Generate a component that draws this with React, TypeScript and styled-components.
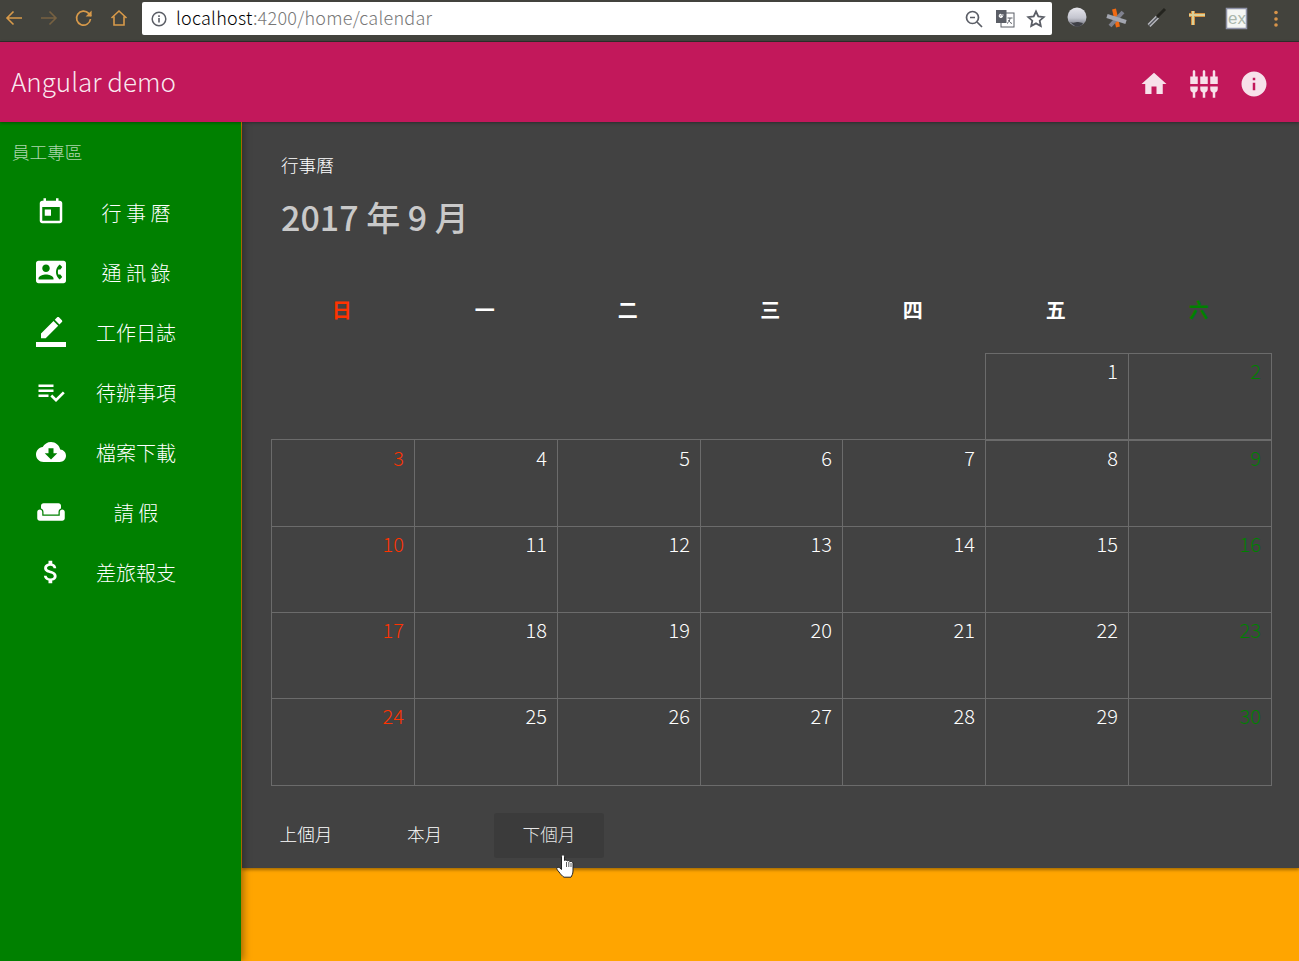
import * as React from 'react'
import styled, { createGlobalStyle } from 'styled-components'

const CJK = `'Noto Sans CJK TC', 'Noto Sans', sans-serif`

const Global = createGlobalStyle`
  html, body {
    margin: 0;
    padding: 0;
    height: 100%;
    background: #ffa500;
    font-family: ${CJK};
  }
  * { box-sizing: border-box; }
`

const Page = styled.div`
  position: relative;
  width: 1299px;
  height: 961px;
  overflow: hidden;
  display: flex;
  flex-direction: column;
  background: #ffa500;
`

const BrowserBar = styled.div`
  height: 42px;
  flex: none;
  background: #43433d;
  border-bottom: 1px solid #2f2f2b;
  display: flex;
  align-items: flex-start;
  padding: 2px 0 0 4px;
`

const NavButton = styled.div<{ $dim?: boolean }>`
  width: 20px;
  height: 20px;
  margin: 6px 15px 0 0;
  color: #d89a4a;
  opacity: ${p => (p.$dim ? 0.35 : 1)};
  svg { display: block; }
`

const AddressBar = styled.div`
  width: 910px;
  height: 33px;
  margin-left: -2px;
  background: #fff;
  border-radius: 2px;
  display: flex;
  align-items: center;
  padding: 0 6px 0 9px;
`

const Url = styled.div`
  flex: 1;
  margin: -2px 0 0 9px;
  font: 300 18px/33px ${CJK};
  letter-spacing: 0.25px;
  color: #000;
  white-space: nowrap;
  span { color: #777; }
`

const OmniIcon = styled.div`
  width: 20px;
  height: 20px;
  margin-left: 11px;
  color: #5b5e66;
  svg { display: block; }
`

const Extensions = styled.div`
  display: flex;
  align-items: center;
  height: 34px;
  margin-left: 14px;
  gap: 20px;
`

const Ext = styled.div`
  width: 20px;
  height: 20px;
  svg { display: block; overflow: visible; }
`

const AppBar = styled.div`
  position: relative;
  z-index: 3;
  height: 80px;
  flex: none;
  background: #c2185b;
  color: rgba(255, 255, 255, 0.87);
  display: flex;
  align-items: center;
  justify-content: space-between;
  padding: 0 30px 0 11px;
  box-shadow: 0 1px 3px rgba(0, 0, 0, 0.35);
`

const AppTitle = styled.div`
  margin-top: -2px;
  font: 300 26px/1 ${CJK};
  color: rgba(255, 255, 255, 0.92);
`

const AppIcons = styled.div`
  display: flex;
  gap: 20px;
  margin-top: 4px;
  svg { display: block; width: 30px; height: 30px; fill: rgba(255, 255, 255, 0.87); }
`

const Body = styled.div`
  flex: 1;
  display: flex;
  min-height: 0;
`

const SideNav = styled.nav`
  position: relative;
  z-index: 2;
  width: 241px;
  flex: none;
  background: #008000;
  box-shadow: 2px 0 8px rgba(0, 0, 0, 0.4);
  padding-top: 16px;
`

const SideTitle = styled.div`
  height: 45px;
  padding-left: 12px;
  font: 300 17.6px/28px ${CJK};
  color: rgba(255, 255, 255, 0.7);
`

const NavRow = styled.div`
  height: 60px;
  display: flex;
  align-items: center;
  padding-left: 36px;
  color: #fff;
  svg { display: block; width: 30px; height: 30px; margin-top: -2px; fill: #fff; flex: none; }
`

const NavLabel = styled.div`
  width: 140px;
  text-align: center;
  font: 300 20px/30px ${CJK};
`

const Content = styled.main`
  flex: 1;
  min-width: 0;
  margin-left: 1px;
`

const Card = styled.section`
  height: 746px;
  background: #424242;
  color: #fff;
  padding: 28px 27px 0 29px;
  box-shadow: 0 2px 3px rgba(0, 0, 0, 0.35);
`

const Eyebrow = styled.div`
  margin-left: 10px;
  font: 300 17.6px/30px ${CJK};
`

const Heading = styled.h1`
  margin: 13px 0 0 10px;
  font: 500 34px/48px ${CJK};
  color: rgba(255, 255, 255, 0.72);
`

const WeekRow = styled.div`
  display: grid;
  grid-template-columns: 143px 143px 143px 142px 143px 143px 143px;
  margin: 49px 0 0 -0.7px;
  height: 63px;
`

const WeekDay = styled.div<{ $color: string }>`
  text-align: center;
  font: 700 20px/40px ${CJK};
  color: ${p => p.$color};
`

const Grid = styled.div`
  display: grid;
  grid-template-columns: 143px 143px 143px 142px 143px 143px 143px;
  grid-template-rows: 86px 87px 86px 86px 87px;
  width: 1001px;
`

const Cell = styled.div<{ $color: string; $row: number }>`
  border: 1px solid #6b6b6b;
  margin: 0 -1px ${p => (p.$row === 0 ? '-2px' : '-1px')} 0;
  padding: ${p => (p.$row === 1 ? '4px' : '3px')} 10px 0 0;
  text-align: right;
  font: 300 20px/28px ${CJK};
  color: ${p => p.$color};
`

const Blank = styled.div``

const Actions = styled.div`
  display: flex;
  margin: 28px 0 0 -20px;
`

const TextButton = styled.button<{ $hover?: boolean; $gap: number; $width: number }>`
  width: ${p => p.$width}px;
  height: 45px;
  margin-left: ${p => p.$gap}px;
  border: 0;
  border-radius: 3px;
  background: ${p => (p.$hover ? '#3b3b3b' : 'transparent')};
  color: ${p => (p.$hover ? '#e6e6e6' : '#fff')};
  font: 300 17.6px/41px ${CJK};
  padding: 0 0 4px;
`

const Pointer = styled.svg`
  position: absolute;
  left: 556px;
  top: 854px;
  z-index: 5;
`

const RED = '#ff3300'
const GREEN = '#008000'
const WHITE = '#ffffff'

const weekdays: [string, string][] = [
  ['日', RED],
  ['一', WHITE],
  ['二', WHITE],
  ['三', WHITE],
  ['四', WHITE],
  ['五', WHITE],
  ['六', GREEN],
]

const navItems: [string, React.ReactNode][] = [
  ['行 事 曆', <path key="a" d="M19 3h-1V1h-2v2H8V1H6v2H5c-1.11 0-1.99.9-1.99 2L3 19c0 1.1.89 2 2 2h14c1.1 0 2-.9 2-2V5c0-1.1-.9-2-2-2zm0 16H5V8h14v11zM7 10h5v5H7z" />],
  ['通 訊 錄', <path key="b" d="M22 3H2C.9 3 0 3.9 0 5v14c0 1.1.9 2 2 2h20c1.1 0 1.99-.9 1.99-2L24 5c0-1.1-.9-2-2-2zM8 6c1.66 0 3 1.34 3 3s-1.34 3-3 3-3-1.34-3-3 1.34-3 3-3zm6 12H2v-1c0-2 4-3.1 6-3.1s6 1.1 6 3.1v1zm3.85-4h1.64L21 16l-1.99 1.99c-1.31-.98-2.28-2.38-2.73-3.99-.18-.64-.28-1.31-.28-2s.1-1.36.28-2c.45-1.62 1.42-3.01 2.73-3.99L21 8l-1.51 2h-1.64c-.22.63-.35 1.3-.35 2s.13 1.37.35 2z" />],
  ['工作日誌', <path key="c" d="M17.75 7L14 3.25l-10 10V17h3.75l10-10zm2.96-2.96c.39-.39.39-1.02 0-1.41L18.37.29c-.39-.39-1.02-.39-1.41 0L15 2.25 18.75 6l1.96-1.96zM0 20h24v4H0z" />],
  ['待辦事項', <path key="d" d="M14 10H2v2h12v-2zm0-4H2v2h12V6zM2 16h8v-2H2v2zm19.5-4.5L23 13l-6.99 7-4.51-4.5L13 14l3.01 3 5.49-5.5z" />],
  ['檔案下載', <path key="e" d="M19.35 10.04C18.67 6.59 15.64 4 12 4 9.11 4 6.6 5.64 5.35 8.04 2.34 8.36 0 10.91 0 14c0 3.31 2.69 6 6 6h13c2.76 0 5-2.24 5-5 0-2.64-2.05-4.78-4.65-4.96zM17 13l-5 5-5-5h3V9h4v4h3z" />],
  ['請 假', <path key="f" d="M21 10c-1.1 0-2 .9-2 2v3H5v-3c0-1.1-.9-2-2-2s-2 .9-2 2v5c0 1.1.9 2 2 2h18c1.1 0 2-.9 2-2v-5c0-1.1-.9-2-2-2zm-3-5H6c-1.1 0-2 .9-2 2v2.15c1.16.41 2 1.51 2 2.82V14h12v-2.03c0-1.3.84-2.4 2-2.82V7c0-1.1-.9-2-2-2z" />],
  ['差旅報支', <path key="g" d="M11.8 10.9c-2.27-.59-3-1.2-3-2.15 0-1.09 1.01-1.85 2.7-1.85 1.78 0 2.44.85 2.5 2.1h2.21c-.07-1.72-1.12-3.3-3.21-3.81V3h-3v2.16c-1.94.42-3.5 1.68-3.5 3.61 0 2.31 1.91 3.46 4.7 4.13 2.5.6 3 1.48 3 2.41 0 .69-.49 1.79-2.7 1.79-2.06 0-2.87-.92-2.98-2.1h-2.2c.12 2.19 1.76 3.42 3.68 3.83V21h3v-2.15c1.95-.37 3.5-1.5 3.5-3.55 0-2.84-2.43-3.81-4.7-4.4z" />],
]

const dayColor = (index: number) => {
  if (index % 7 === 0) return RED
  if (index % 7 === 6) return GREEN
  return WHITE
}

// September 2017 starts on a Friday, so five blanks lead the month
const LEADING = 5

const BrowserChrome: React.FC = () => (
  <BrowserBar>
    <NavButton>
      <svg viewBox="0 0 20 20" width="20" height="20" fill="none" stroke="currentColor" strokeWidth="1.6">
        <path d="M18 10H3M9.5 3.5 3 10l6.5 6.5" />
      </svg>
    </NavButton>
    <NavButton $dim>
      <svg viewBox="0 0 20 20" width="20" height="20" fill="none" stroke="currentColor" strokeWidth="1.6">
        <path d="M2 10h15M10.5 3.5 17 10l-6.500 6.500" />
      </svg>
    </NavButton>
    <NavButton>
      <svg viewBox="0 0 20 20" width="20" height="20" fill="none" stroke="currentColor" strokeWidth="1.7">
        <path d="M16.500 11a7 7 0 1 1-1.800-5.600L17 8" />
        <path d="M17.600 2.600v6h-6" fill="currentColor" stroke="none" />
      </svg>
    </NavButton>
    <NavButton>
      <svg viewBox="0 0 20 20" width="20" height="20" fill="none" stroke="currentColor" strokeWidth="1.6">
        <path d="M2.500 10 10 3l7.500 7M5 8.500V17h10V8.500" />
      </svg>
    </NavButton>
    <AddressBar>
      <svg viewBox="0 0 16 16" width="16" height="16" fill="none">
        <circle cx="8" cy="8" r="6.800" stroke="#5b5e66" strokeWidth="1.5" />
        <path d="M8 7v4.500M8 4.300v1.600" stroke="#5b5e66" strokeWidth="1.6" />
      </svg>
      <Url>
        localhost<span>:4200/home/calendar</span>
      </Url>
      <OmniIcon>
        <svg viewBox="0 0 20 20" width="20" height="20" fill="none" stroke="currentColor" strokeWidth="1.7">
          <circle cx="8.500" cy="8.500" r="6" />
          <path d="M13 13l5 5M6 8.500h5" />
        </svg>
      </OmniIcon>
      <OmniIcon>
        <svg viewBox="0 0 20 20" width="20" height="20">
          <rect x="6" y="4" width="13" height="14" fill="#fff" stroke="currentColor" strokeWidth="1" />
          <path d="M1 1h10.500v13H1z" fill="currentColor" />
          <path d="M8.600 6H6v1.600h1.200A1.600 1.600 0 1 1 6 5.200" fill="none" stroke="#fff" strokeWidth="1.100" />
          <path d="M12.500 9h5M15 9c0 2.500-1.500 4.500-3 5.500M13.500 11c.8 1.800 2 3 3.500 3.500" fill="none" stroke="currentColor" strokeWidth="1" />
        </svg>
      </OmniIcon>
      <OmniIcon>
        <svg viewBox="0 0 20 20" width="20" height="20" fill="none" stroke="currentColor" strokeWidth="1.8">
          <path d="M10 2.500l2.300 5 5.400.6-4 3.600 1.100 5.400-4.800-2.700-4.800 2.700 1.100-5.400-4-3.600 5.400-.6z" />
        </svg>
      </OmniIcon>
    </AddressBar>
    <Extensions>
      <Ext>
        <svg viewBox="0 0 20 20" width="20" height="20">
          <defs>
            <linearGradient id="globe" x1="0" y1="0" x2="0" y2="1">
              <stop offset="0" stopColor="#e6e6ec" />
              <stop offset="0.55" stopColor="#c4c5cf" />
              <stop offset="1" stopColor="#6d6e78" />
            </linearGradient>
          </defs>
          <circle cx="11" cy="8" r="9.500" fill="url(#globe)" />
          <path d="M3.500 13c3 1 4 4 7.500 4.500 3 0 5-1.500 6-3.500-2 0-3-1-5-1s-4 1.500-8.500 0z" fill="#3f4046" />
        </svg>
      </Ext>
      <Ext>
        <svg viewBox="0 0 20 20" width="20" height="20" strokeWidth="4">
          <path d="M8 0l4 18" stroke="#f26a12" />
          <path d="M17 3 4 17" stroke="#7f818e" />
          <path d="M1 7l19 6" stroke="#a3a6b0" />
        </svg>
      </Ext>
      <Ext>
        <svg viewBox="0 0 20 20" width="20" height="20" fill="none">
          <path d="M3 16.500 11.500 8" stroke="#b9bac0" strokeWidth="4" />
          <path d="M3 16.500 11.500 8" stroke="#54565c" strokeWidth="1.500" />
          <path d="M11 8l8-8" stroke="#24241f" strokeWidth="3" />
        </svg>
      </Ext>
      <Ext>
        <svg viewBox="0 0 20 20" width="20" height="20" fill="none">
          <path d="M3 6h16M7 2v14" stroke="#d9913f" strokeWidth="4" />
          <path d="M3 6h16M7 2v14" stroke="#d8d09a" strokeWidth="2" />
        </svg>
      </Ext>
      <Ext>
        <svg viewBox="0 0 20 20" width="20" height="20">
          <rect x="0.500" y="-0.500" width="20" height="20" fill="#f4f6f4" stroke="#8f93a8" strokeWidth="1.500" />
          <text x="2" y="15" fontFamily="'Liberation Sans', sans-serif" fontSize="17" fill="#aab6ac">ex</text>
        </svg>
      </Ext>
      <Ext>
        <svg viewBox="0 0 20 20" width="20" height="20" fill="#d8944a">
          <circle cx="10" cy="3.500" r="1.800" />
          <circle cx="10" cy="10" r="1.800" />
          <circle cx="10" cy="16" r="1.800" />
        </svg>
      </Ext>
    </Extensions>
  </BrowserBar>
)

export default function App() {
  const cells = [...Array(LEADING).fill(null), ...Array.from({ length: 30 }, (_, i) => i + 1)]

  return (
    <Page>
      <Global />
      <BrowserChrome />
      <AppBar>
        <AppTitle>Angular demo</AppTitle>
        <AppIcons>
          <svg viewBox="0 0 24 24"><path d="M10 20v-6h4v6h5v-8h3L12 3 2 12h3v8z" /></svg>
          <svg viewBox="0 0 24 24"><path d="M5 2c0-.55-.45-1-1-1s-1 .45-1 1v4H1v6h6V6H5V2zm4 14c0 1.3.84 2.4 2 2.82V23h2v-4.18c1.16-.41 2-1.51 2-2.82v-2H9v2zm-8 0c0 1.3.84 2.4 2 2.82V23h2v-4.18C6.16 18.4 7 17.3 7 16v-2H1v2zM21 6V2c0-.55-.45-1-1-1s-1 .45-1 1v4h-2v6h6V6h-2zm-8-4c0-.55-.45-1-1-1s-1 .45-1 1v4H9v6h6V6h-2V2zm4 14c0 1.3.84 2.4 2 2.82V23h2v-4.18c1.16-.41 2-1.51 2-2.82v-2h-6v2z" /></svg>
          <svg viewBox="0 0 24 24"><path d="M12 2C6.48 2 2 6.48 2 12s4.48 10 10 10 10-4.48 10-10S17.52 2 12 2zm1 15h-2v-6h2v6zm0-8h-2V7h2v2z" /></svg>
        </AppIcons>
      </AppBar>
      <Body>
        <SideNav>
          <SideTitle>員工專區</SideTitle>
          {navItems.map(([label, icon]) => (
            <NavRow key={label}>
              <svg viewBox="0 0 24 24">{icon}</svg>
              <NavLabel>{label}</NavLabel>
            </NavRow>
          ))}
        </SideNav>
        <Content>
          <Card>
            <Eyebrow>行事曆</Eyebrow>
            <Heading>2017 年 9 月</Heading>
            <WeekRow>
              {weekdays.map(([name, color]) => (
                <WeekDay key={name} $color={color}>{name}</WeekDay>
              ))}
            </WeekRow>
            <Grid>
              {cells.map((day, i) =>
                day === null ? (
                  <Blank key={`blank-${i}`} />
                ) : (
                  <Cell key={day} $color={dayColor(i)} $row={Math.floor(i / 7)}>{day}</Cell>
                ),
              )}
            </Grid>
            <Actions>
              <TextButton $gap={0} $width={110}>上個月</TextButton>
              <TextButton $gap={20} $width={87}>本月</TextButton>
              <TextButton $gap={26} $width={110} $hover>下個月</TextButton>
            </Actions>
          </Card>
        </Content>
      </Body>
      <Pointer width="18" height="24" viewBox="0 0 18 24">
        <path d="M5.500 2.500C5.500 1.400 6.200.8 7 .8 7.800.8 8.500 1.400 8.500 2.500V6.500C9.500 5.800 11 6 11.300 7 12.200 6.300 13.600 6.500 13.900 7.700 14.800 7.200 16.800 7.500 17 9V17C17 20 15.800 21.500 15 23.200H8C6 22 4.500 20 3 18 2 16.800.6 15.400.8 14.300 1 13.100 2.800 13 3.700 13.800L5.500 15.500Z" fill="#fff" stroke="#222" strokeWidth="1" />
        <path d="M10.500 8v5M12.800 8v5M15 9v4" stroke="#333" strokeWidth="0.8" fill="none" />
      </Pointer>
    </Page>
  )
}
